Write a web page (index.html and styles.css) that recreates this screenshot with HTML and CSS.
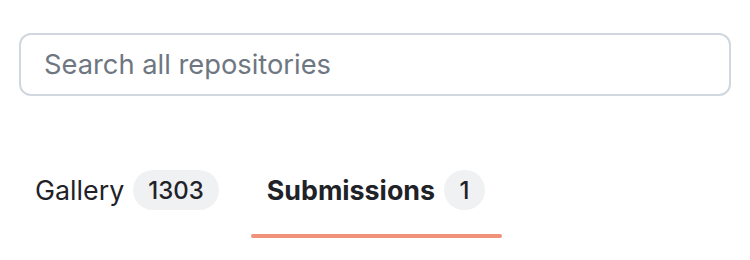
FILE: index.html
```html
<!DOCTYPE html>
<html lang="en">
<head>
<meta charset="utf-8">
<title>Repositories</title>
<link rel="stylesheet" href="styles.css">
</head>
<body>
<div class="page">
  <div class="search"><span class="placeholder">Search all repositories</span></div>
  <nav class="tabs">
    <a class="tab">
      <span class="tab-row"><span class="label">Gallery</span><span class="counter">1303</span></span>
      <span class="underline"></span>
    </a>
    <a class="tab selected">
      <span class="tab-row"><span class="label">Submissions</span><span class="counter">1</span></span>
      <span class="underline"></span>
    </a>
  </nav>
</div>
</body>
</html>
```
FILE: styles.css
```css
html, body {
  margin: 0;
  padding: 0;
  background: #ffffff;
}
body {
  font-family: Inter, "Liberation Sans", Arial, sans-serif;
  color: #1f2328;
}
.page {
  padding: 33px 19px 0 19px;
}
.search {
  box-sizing: border-box;
  height: 63px;
  border: 2px solid #d0d7de;
  border-radius: 12px;
  padding: 0 23px;
  display: flex;
  align-items: center;
}
.placeholder {
  font-size: 27.3px;
  color: #6e7781;
  line-height: 1;
}
.tabs {
  display: flex;
  gap: 16px;
  margin-top: 74px;
}
.tab {
  display: flex;
  flex-direction: column;
  color: #1f2328;
  text-decoration: none;
}
.tab-row {
  display: flex;
  align-items: center;
  height: 40px;
  padding: 0 16px;
}
.label {
  font-size: 26.8px;
  line-height: 1;
}
.selected .label {
  font-weight: 700;
}
.counter {
  box-sizing: border-box;
  height: 40px;
  min-width: 41px;
  margin-left: 9px;
  padding: 0 15px;
  border-radius: 20px;
  background: #eff1f3;
  font-size: 24px;
  font-weight: 500;
  display: flex;
  align-items: center;
  justify-content: center;
}
.selected .tab-row {
  padding-right: 17px;
}
.underline {
  height: 4px;
  margin-top: 24px;
  border-radius: 2px;
}
.selected .underline {
  background: #f0917a;
}
```
